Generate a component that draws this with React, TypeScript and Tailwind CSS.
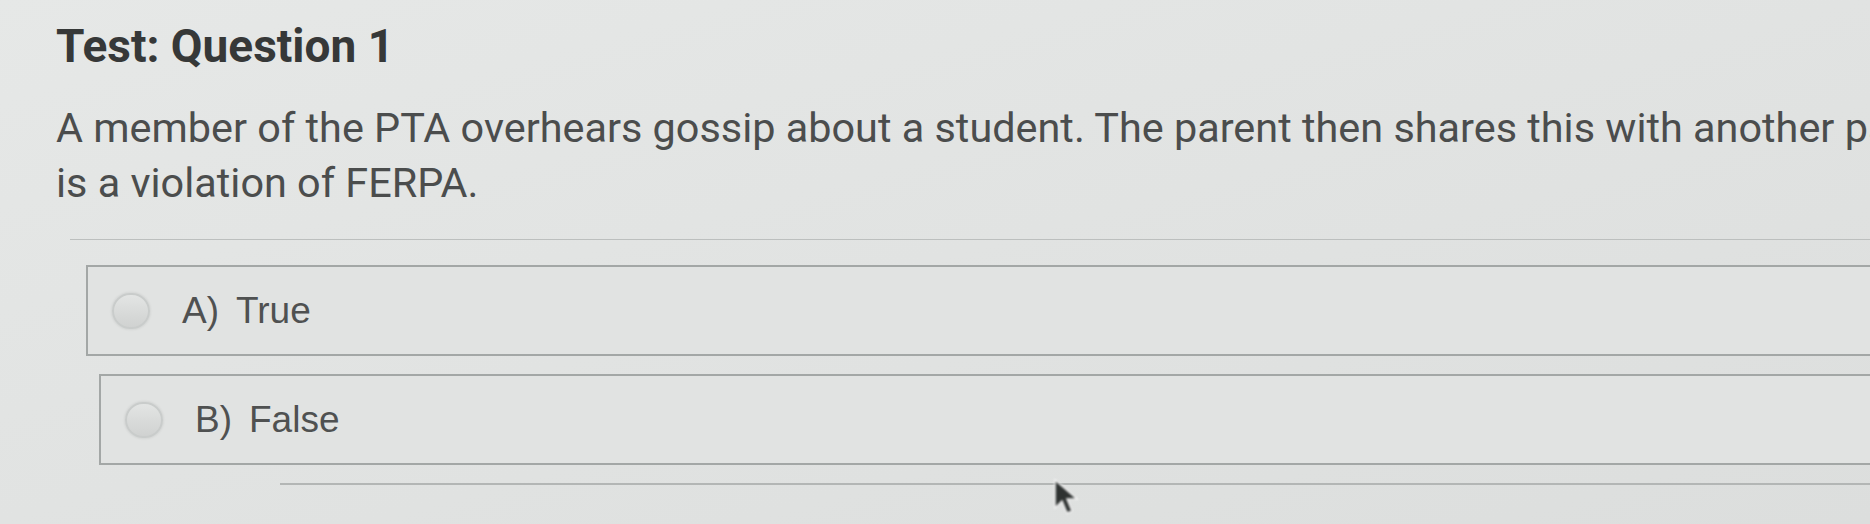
import React from 'react'

type Choice = { key: string; label: string; indent: string }

const choices: Choice[] = [
  { key: 'A', label: 'True', indent: 'ml-[86px]' },
  { key: 'B', label: 'False', indent: 'ml-[99px]' },
]

function Radio() {
  return (
    <span className="block w-[38px] h-[36px] rounded-full border-2 border-[#c9cccb] bg-gradient-to-b from-[#e3e5e4] via-[#d9dbda] to-[#d0d2d1] shadow-[0_0_3px_rgba(0,0,0,0.12)] shrink-0" />
  )
}

function ChoiceRow({ choice }: { choice: Choice }) {
  return (
    <label
      className={`${choice.indent} -mr-10 h-[91px] flex items-center pl-[24px] border-2 border-[#a3a7a6] bg-[#e1e3e2] cursor-pointer`}
    >
      <Radio />
      <span className="ml-[32px] flex gap-[17px] text-[37px] leading-none text-[#4f5151] font-['Liberation_Sans',Arial,sans-serif]">
        <span>{choice.key})</span>
        <span>{choice.label}</span>
      </span>
    </label>
  )
}

function Pointer() {
  return (
    <svg
      className="absolute left-[1052px] top-[478px] blur-[1px]"
      width="30"
      height="40"
      viewBox="0 0 30 40"
    >
      <path d="M3 2 L3 30 L10 23 L15 35 L20 33 L15 21 L25 21 Z" fill="#2e3231" stroke="#f2f2f2" strokeWidth="1.5" />
    </svg>
  )
}

export default function App() {
  return (
    <div className="relative w-[1870px] h-[524px] overflow-hidden bg-gradient-to-br from-[#e6e8e7] via-[#e1e3e2] to-[#dcdedd] font-['Roboto',sans-serif]">
      <div className="pl-[56px] pt-[19px]">
        <h1 className="text-[46px] leading-[54px] font-bold text-[#363838]">Test: Question 1</h1>
        <p className="mt-[28px] text-[41.4px] leading-[55px] text-[#4b4d4d] whitespace-nowrap">
          A member of the PTA overhears gossip about a student. The parent then shares this with another parent. This
          <br />
          is a violation of FERPA.
        </p>
      </div>

      <div className="mt-[28px] ml-[70px] h-px bg-[#bcbfbe]" />

      <div className="mt-[25px] flex flex-col gap-[18px]">
        {choices.map(c => (
          <ChoiceRow key={c.key} choice={c} />
        ))}
      </div>

      <div className="mt-[18px] ml-[280px] h-[2px] bg-[#b3b6b5]" />

      <Pointer />
    </div>
  )
}
